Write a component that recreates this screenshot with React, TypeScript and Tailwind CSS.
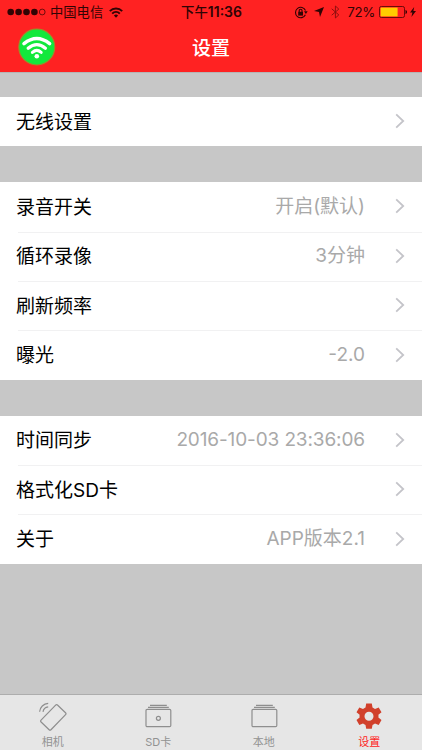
import React from 'react';

type Row = { label: string; value?: string; valueClass?: string };

const groups: Row[][] = [
  [{ label: '无线设置' }],
  [
    { label: '录音开关', value: '开启(默认)' },
    { label: '循环录像', value: '3分钟' },
    { label: '刷新频率' },
    { label: '曝光', value: '-2.0' },
  ],
  [
    { label: '时间同步', value: '2016-10-03 23:36:06', valueClass: 'tracking-[-0.12px]' },
    { label: '格式化SD卡' },
    { label: '关于', value: 'APP版本2.1' },
  ],
];

function Chevron() {
  return (
    <svg className="-mt-px ml-[29.5px] h-4 w-[10px] shrink-0" viewBox="0 0 10 16" fill="none" stroke="#c4c4c9" strokeWidth="1.8">
      <path d="M1.2 1.4 8.2 8 1.2 14.6" />
    </svg>
  );
}

function SettingRow({ row, first }: { row: Row; first: boolean }) {
  return (
    <div className="relative flex h-[49.4px] items-center pl-4 pr-[17.5px]">
      {!first && <div className="absolute left-[18px] right-0 top-0 h-px bg-[#f1f1f2]" />}
      <span className="mt-[2px] text-[19px] leading-6 text-black">{row.label}</span>
      <span className={`ml-auto text-[19px] leading-6 text-[#a9a9a9] ${row.valueClass ?? ''}`}>{row.value}</span>
      <Chevron />
    </div>
  );
}

function WifiGlyph() {
  return (
    <svg className="ml-[6px] h-[11px] w-[14px]" viewBox="0 0 14 11" fill="none" stroke="#300404" strokeWidth="2">
      <path d="M.8 4.1a9 9 0 0 1 12.4 0M3.2 6.6a5.5 5.5 0 0 1 7.6 0" />
      <path d="M7 10.7 4.9 8.5a3 3 0 0 1 4.2 0z" fill="#300404" stroke="none" />
    </svg>
  );
}

function StatusBar() {
  return (
    <div className="grid h-6 grid-cols-[1fr_auto_1fr] items-center text-[13.3px] leading-6 text-[#300404]">
      <div className="flex items-center pl-[7px]">
        <svg className="mr-[4px] h-[8px] w-[39px]" viewBox="0 0 39 8" fill="#300404">
          <circle cx="3.7" cy="4" r="3.3" />
          <circle cx="11.6" cy="4" r="3.3" />
          <circle cx="19.5" cy="4" r="3.3" />
          <circle cx="27.4" cy="4" r="3.3" />
          <circle cx="35.2" cy="4" r="2.9" fill="none" stroke="#300404" strokeWidth=".7" />
        </svg>
        <span>中国电信</span>
        <WifiGlyph />
      </div>
      <span className="ml-px text-[13.4px] font-medium">
        下午<span className="text-[14px] font-semibold">11:36</span>
      </span>
      <div className="flex items-center justify-end pr-[6px]">
        <svg className="h-[13px] w-[14px]" viewBox="0 0 14 13" fill="none" stroke="#300404" strokeWidth="1.1">
          <path d="M11.4 8.8A5.2 5.2 0 1 1 11.5 4.5" />
          <path d="m10 5.2 3.7.1-1.8 2.8z" fill="#300404" stroke="none" />
          <rect x="4.2" y="5.8" width="4.8" height="3.8" fill="#300404" stroke="none" />
          <path d="M5.2 6V4.6a1.4 1.4 0 0 1 2.8 0V6" />
        </svg>
        <svg className="ml-[6px] h-[10px] w-[10px]" viewBox="0 0 10 10" fill="#300404">
          <path d="M10 0 6 10 5 5 0 4z" />
        </svg>
        <svg className="ml-[7px] h-[14px] w-[9px]" viewBox="0 0 9 14" fill="none" stroke="#8f1010" strokeWidth="1">
          <path d="m.7 3.8 7.1 6.1L4.4 13V1l3.4 3.1L.7 10.2" />
        </svg>
        <span className="ml-[7px] text-[13.3px] tracking-[-0.3px]">72%</span>
        <svg className="ml-[4px] h-3 w-[28px]" viewBox="0 0 28 12">
          <rect x=".5" y=".5" width="25" height="11" rx="1.8" fill="none" stroke="#6b0909" />
          <rect x="1.6" y="1.6" width="17" height="8.8" fill="#ffcc00" />
          <path d="M26.5 4c2 .5 2 3.5 0 4z" fill="#300404" />
        </svg>
        <svg className="ml-[3px] h-[10px] w-[6px]" viewBox="0 0 6 10" fill="#300404">
          <path d="M4.2 0 0 5.5h2.4L1.4 10 6 4H3.4z" />
        </svg>
      </div>
    </div>
  );
}

function Header() {
  return (
    <header className="h-[72px] bg-[#ff2222]">
      <StatusBar />
      <div className="grid h-12 grid-cols-[1fr_auto_1fr] items-center">
        <svg className="-mt-[2px] ml-[18px] h-[38px] w-[38px]" viewBox="0 0 38 38" fill="none" stroke="#fff" strokeLinecap="round">
          <circle cx="18.8" cy="19" r="18" fill="#12e83c" stroke="#a08a2b" strokeWidth="1.1" />
          <path d="M6 15.6Q18.8 5.4 31.6 15.6" strokeWidth="3.5" />
          <path d="M10.2 20.3Q18.8 13 27.4 20.3" strokeWidth="3.3" />
          <path d="M14.4 24.4Q18.8 20.4 23.2 24.4" strokeWidth="3" />
          <circle cx="18.8" cy="28.3" r="2.3" fill="#fff" stroke="none" />
        </svg>
        <h1 className="mt-[2px] text-[19px] font-medium leading-6 text-white">设置</h1>
      </div>
    </header>
  );
}

function CameraIcon() {
  return (
    <svg className="h-[30px] w-[30px]" viewBox="0 0 30 30" fill="none" stroke="#8e8e8e" strokeWidth="1.2">
      <rect x="8.4" y="4.6" width="13.8" height="23.6" rx="1.3" transform="rotate(44 15.3 16.4)" />
      <path d="M1.6 10.8a9 9 0 0 1 8.6-8.4M5 10.8a6 6 0 0 1 5.2-5" />
    </svg>
  );
}

function BoxIcon({ dot = false }: { dot?: boolean }) {
  return (
    <svg className="h-[30px] w-[30px]" viewBox="0 0 30 30" fill="none" stroke="#8e8e8e" strokeWidth="1.2">
      <rect x="3" y="8.4" width="24.8" height="17.2" rx="1.2" />
      <path d="M5 6.4h20.8M7 4.3h16.8" />
      {dot && <circle cx="15.4" cy="17.3" r="2" />}
    </svg>
  );
}

function GearIcon() {
  return (
    <svg className="h-[30px] w-[30px]" viewBox="0 0 30 30" fill="#d1402b">
      <path
        transform="translate(0 -1)"
        fillRule="evenodd"
        d="M12.2 3.5h5.6l.7 4a8.2 8.2 0 0 1 2.5 1.5l3.7-1.5 2.8 4.8-3.1 2.5a9 9 0 0 1 0 2.8l3.1 2.5-2.8 4.8-3.7-1.5a8.2 8.2 0 0 1-2.5 1.5l-.7 3.9h-5.6l-.7-3.9A8.2 8.2 0 0 1 9 23.4l-3.7 1.5-2.8-4.8 3.1-2.5a9 9 0 0 1 0-2.8l-3.1-2.5 2.8-4.8L9 9a8.2 8.2 0 0 1 2.5-1.5zM15 11.7a4.5 4.5 0 1 0 0 9 4.5 4.5 0 0 0 0-9z"
      />
    </svg>
  );
}

const tabs = [
  { label: '相机', icon: <CameraIcon />, active: false },
  { label: 'SD卡', icon: <BoxIcon dot />, active: false },
  { label: '本地', icon: <BoxIcon />, active: false },
  { label: '设置', icon: <GearIcon />, active: true },
];

export default function App() {
  return (
    <div className="flex h-[750px] w-[422px] flex-col overflow-hidden bg-[#c7c7c7] font-[Inter,'Noto_Sans_CJK_SC',sans-serif]">
      <Header />
      <main className="flex flex-1 flex-col gap-[35.8px] border-t border-[#b5b5b5] pt-6">
        {groups.map((rows, i) => (
          <section key={i} className="bg-white">
            {rows.map((row, j) => (
              <SettingRow key={row.label} row={row} first={j === 0} />
            ))}
          </section>
        ))}
      </main>
      <nav className="grid h-14 grid-cols-4 border-t border-[#adadad] bg-[#e6e6e6]">
        {tabs.map((tab) => (
          <div key={tab.label} className="flex flex-col items-center pt-[6px]">
            {tab.icon}
            <span className={`mt-[3px] text-[11px] leading-4 ${tab.active ? 'text-[#ff2222]' : 'text-[#929292]'}`}>{tab.label}</span>
          </div>
        ))}
      </nav>
    </div>
  );
}
